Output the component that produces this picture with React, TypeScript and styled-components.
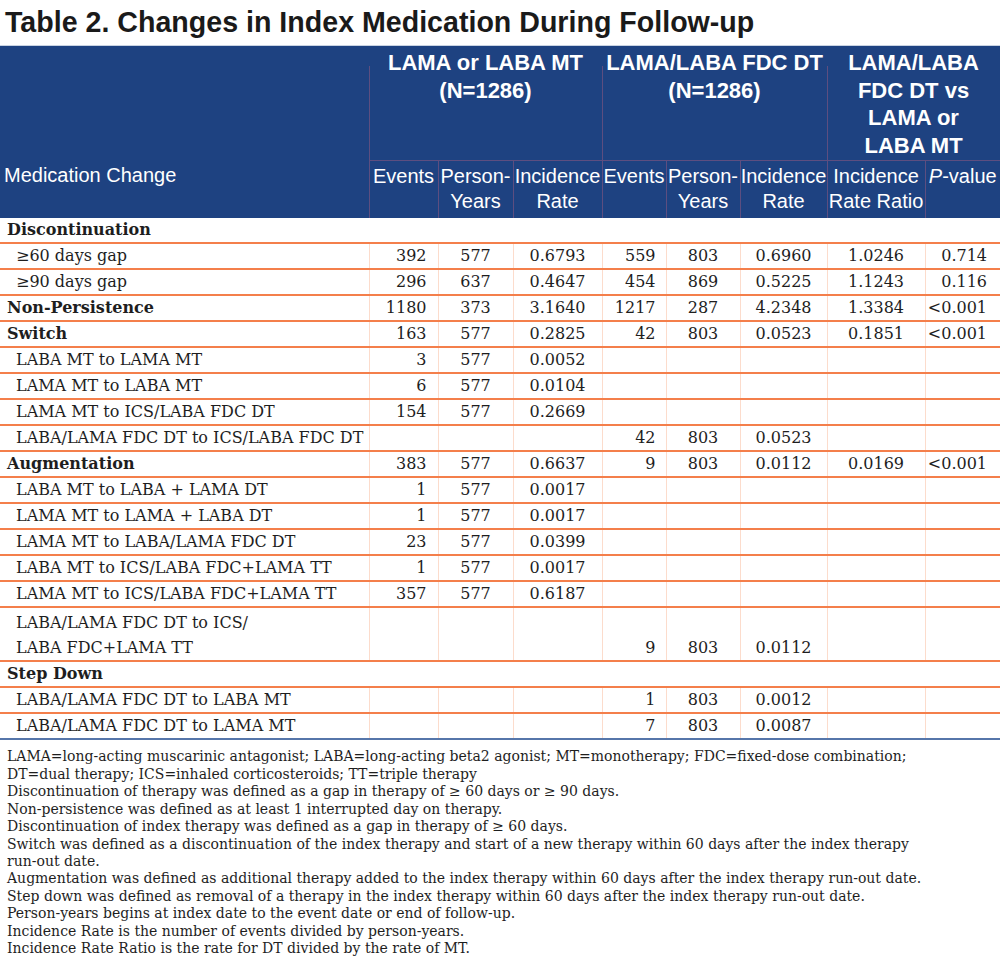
import React from "react";
import styled, { createGlobalStyle, css } from "styled-components";

const Global = createGlobalStyle`
  html, body { margin: 0; padding: 0; background: #ffffff; }
  body { width: 1000px; }
`;

const Page = styled.div`
  width: 1000px;
  display: flex;
  flex-direction: column;
`;

const Title = styled.h1`
  margin: 0;
  height: 45px;
  padding: 4px 0 0 5px;
  box-sizing: border-box;
  font-family: "Liberation Sans", Arial, sans-serif;
  font-weight: 700;
  font-size: 28.6px;
  line-height: 36px;
  color: #1a1a1a;
  white-space: nowrap;
`;

const Table = styled.table`
  width: 1000px;
  border-collapse: collapse;
  table-layout: fixed;
  border-top: 1px solid #c9d3e2;
  border-bottom: 2px solid #5676aa;
`;

const HEADER_LINE = "#5d4e80";

const HeadRow = styled.tr<{ $h: number }>`
  height: ${(p) => p.$h}px;
  background: #1e4281;
`;

const GroupTh = styled.th<{ $sep?: boolean }>`
  padding: 3px 2px 0;
  vertical-align: top;
  text-align: center;
  font-family: "Liberation Sans", Arial, sans-serif;
  font-weight: 700;
  font-size: 22px;
  line-height: 27.7px;
  color: #ffffff;
  white-space: nowrap;
  ${(p) =>
    p.$sep &&
    css`
      background: linear-gradient(${HEADER_LINE}, ${HEADER_LINE}) 0 20px / 1px 100% no-repeat;
    `}
`;

const SubTh = styled.th<{ $first?: boolean; $align?: string }>`
  padding: 3px 0 0;
  vertical-align: top;
  text-align: ${(p) => p.$align || "center"};
  font-family: "Liberation Sans", Arial, sans-serif;
  font-weight: 400;
  font-size: 20px;
  line-height: 25px;
  color: #ffffff;
  white-space: nowrap;
  ${(p) =>
    p.$first
      ? css`
          padding-left: 4px;
        `
      : css`
          border-left: 1px solid ${HEADER_LINE};
          border-top: 1px solid ${HEADER_LINE};
        `}
`;

const Italic = styled.i`
  font-style: italic;
`;

const BodyRow = styled.tr<{ $tall?: boolean }>`
  height: ${(p) => (p.$tall ? 54 : 24)}px;
  border-bottom: 2px solid #f47f4b;
  &:last-child {
    border-bottom: none;
  }
`;

const serif = `"DejaVu Serif", "Liberation Serif", serif`;

const LabelCell = styled.td<{ $bold?: boolean; $indent?: boolean; $tall?: boolean }>`
  padding: 0 0 0 ${(p) => (p.$indent ? 16 : 7)}px;
  font-family: ${serif};
  font-size: 16px;
  line-height: ${(p) => (p.$tall ? 25 : 24)}px;
  font-weight: ${(p) => (p.$bold ? 700 : 400)};
  color: #1e1e1e;
  white-space: nowrap;
  vertical-align: ${(p) => (p.$tall ? "bottom" : "middle")};
`;

const NumCell = styled.td<{ $align: "right" | "center"; $pad?: number; $tall?: boolean }>`
  padding: 0 ${(p) => (p.$align === "right" ? p.$pad ?? 11 : 0)}px 0 0;
  border-left: 1px solid #fcdccc;
  text-align: ${(p) => p.$align};
  font-family: ${serif};
  font-size: 16px;
  line-height: ${(p) => (p.$tall ? 25 : 24)}px;
  color: #1e1e1e;
  white-space: nowrap;
  vertical-align: ${(p) => (p.$tall ? "bottom" : "middle")};
`;

const Notes = styled.div`
  padding: 8px 0 0 7px;
  font-family: ${serif};
  font-size: 14px;
  line-height: 17.45px;
  color: #1e1e1e;
  white-space: nowrap;
`;

const Note = styled.p`
  margin: 0;
`;

type Row = {
  label: React.ReactNode;
  kind: "section" | "bold" | "item";
  vals?: string[];
  tall?: boolean;
};

const rows: Row[] = [
  { label: "Discontinuation", kind: "section" },
  { label: "≥60 days gap", kind: "item", vals: ["392", "577", "0.6793", "559", "803", "0.6960", "1.0246", "0.714"] },
  { label: "≥90 days gap", kind: "item", vals: ["296", "637", "0.4647", "454", "869", "0.5225", "1.1243", "0.116"] },
  { label: "Non-Persistence", kind: "bold", vals: ["1180", "373", "3.1640", "1217", "287", "4.2348", "1.3384", "<0.001"] },
  { label: "Switch", kind: "bold", vals: ["163", "577", "0.2825", "42", "803", "0.0523", "0.1851", "<0.001"] },
  { label: "LABA MT to LAMA MT", kind: "item", vals: ["3", "577", "0.0052", "", "", "", "", ""] },
  { label: "LAMA MT to LABA MT", kind: "item", vals: ["6", "577", "0.0104", "", "", "", "", ""] },
  { label: "LAMA MT to ICS/LABA FDC DT", kind: "item", vals: ["154", "577", "0.2669", "", "", "", "", ""] },
  { label: "LABA/LAMA FDC DT to ICS/LABA FDC DT", kind: "item", vals: ["", "", "", "42", "803", "0.0523", "", ""] },
  { label: "Augmentation", kind: "bold", vals: ["383", "577", "0.6637", "9", "803", "0.0112", "0.0169", "<0.001"] },
  { label: "LABA MT to LABA + LAMA DT", kind: "item", vals: ["1", "577", "0.0017", "", "", "", "", ""] },
  { label: "LAMA MT to LAMA + LABA DT", kind: "item", vals: ["1", "577", "0.0017", "", "", "", "", ""] },
  { label: "LAMA MT to LABA/LAMA FDC DT", kind: "item", vals: ["23", "577", "0.0399", "", "", "", "", ""] },
  { label: "LABA MT to ICS/LABA FDC+LAMA TT", kind: "item", vals: ["1", "577", "0.0017", "", "", "", "", ""] },
  { label: "LAMA MT to ICS/LABA FDC+LAMA TT", kind: "item", vals: ["357", "577", "0.6187", "", "", "", "", ""] },
  {
    label: (
      <>
        LABA/LAMA FDC DT to ICS/
        <br />
        LABA FDC+LAMA TT
      </>
    ),
    kind: "item",
    tall: true,
    vals: ["", "", "", "9", "803", "0.0112", "", ""],
  },
  { label: "Step Down", kind: "section" },
  { label: "LABA/LAMA FDC DT to LABA MT", kind: "item", vals: ["", "", "", "1", "803", "0.0012", "", ""] },
  { label: "LABA/LAMA FDC DT to LAMA MT", kind: "item", vals: ["", "", "", "7", "803", "0.0087", "", ""] },
];

const colWidths = [369, 69, 75, 89, 64, 74, 87, 98, 75];
const colAlign: ("right" | "center")[] = ["right", "center", "center", "right", "center", "center", "center", "right"];
const colPad = [11, 0, 0, 10, 0, 0, 0, 13];

const notes: React.ReactNode[] = [
  <>
    LAMA=long-acting muscarinic antagonist; LABA=long-acting beta2 agonist; MT=monotherapy; FDC=fixed-dose combination;
    <br />
    DT=dual therapy; ICS=inhaled corticosteroids; TT=triple therapy
  </>,
  "Discontinuation of therapy was defined as a gap in therapy of ≥ 60 days or ≥ 90 days.",
  "Non-persistence was defined as at least 1 interrupted day on therapy.",
  "Discontinuation of index therapy was defined as a gap in therapy of ≥ 60 days.",
  <>
    Switch was defined as a discontinuation of the index therapy and start of a new therapy within 60 days after the index therapy
    <br />
    run-out date.
  </>,
  "Augmentation was defined as additional therapy added to the index therapy within 60 days after the index therapy run-out date.",
  "Step down was defined as removal of a therapy in the index therapy within 60 days after the index therapy run-out date.",
  "Person-years begins at index date to the event date or end of follow-up.",
  "Incidence Rate is the number of events divided by person-years.",
  "Incidence Rate Ratio is the rate for DT divided by the rate of MT.",
];

export default function App() {
  return (
    <Page>
      <Global />
      <Title>Table 2. Changes in Index Medication During Follow-up</Title>
      <Table>
        <colgroup>
          {colWidths.map((w, i) => (
            <col key={i} style={{ width: w }} />
          ))}
        </colgroup>
        <thead>
          <HeadRow $h={113}>
            <GroupTh />
            <GroupTh colSpan={3} $sep>
              LAMA or LABA MT
              <br />
              (N=1286)
            </GroupTh>
            <GroupTh colSpan={3} $sep>
              LAMA/LABA FDC DT
              <br />
              (N=1286)
            </GroupTh>
            <GroupTh colSpan={2} $sep>
              LAMA/LABA
              <br />
              FDC DT vs
              <br />
              LAMA or
              <br />
              LABA MT
            </GroupTh>
          </HeadRow>
          <HeadRow $h={58}>
            <SubTh $first $align="left">Medication Change</SubTh>
            <SubTh>Events</SubTh>
            <SubTh>
              Person-
              <br />
              Years
            </SubTh>
            <SubTh>
              Incidence
              <br />
              Rate
            </SubTh>
            <SubTh>Events</SubTh>
            <SubTh>
              Person-
              <br />
              Years
            </SubTh>
            <SubTh>
              Incidence
              <br />
              Rate
            </SubTh>
            <SubTh>
              Incidence
              <br />
              Rate Ratio
            </SubTh>
            <SubTh>
              <Italic>P</Italic>-value
            </SubTh>
          </HeadRow>
        </thead>
        <tbody>
          {rows.map((r, i) =>
            r.kind === "section" ? (
              <BodyRow key={i}>
                <LabelCell colSpan={9} $bold>
                  {r.label}
                </LabelCell>
              </BodyRow>
            ) : (
              <BodyRow key={i} $tall={r.tall}>
                <LabelCell $bold={r.kind === "bold"} $indent={r.kind === "item"} $tall={r.tall}>
                  {r.label}
                </LabelCell>
                {r.vals!.map((v, j) => (
                  <NumCell key={j} $align={colAlign[j]} $pad={colPad[j]} $tall={r.tall}>
                    {v}
                  </NumCell>
                ))}
              </BodyRow>
            )
          )}
        </tbody>
      </Table>
      <Notes>
        {notes.map((n, i) => (
          <Note key={i}>{n}</Note>
        ))}
      </Notes>
    </Page>
  );
}
